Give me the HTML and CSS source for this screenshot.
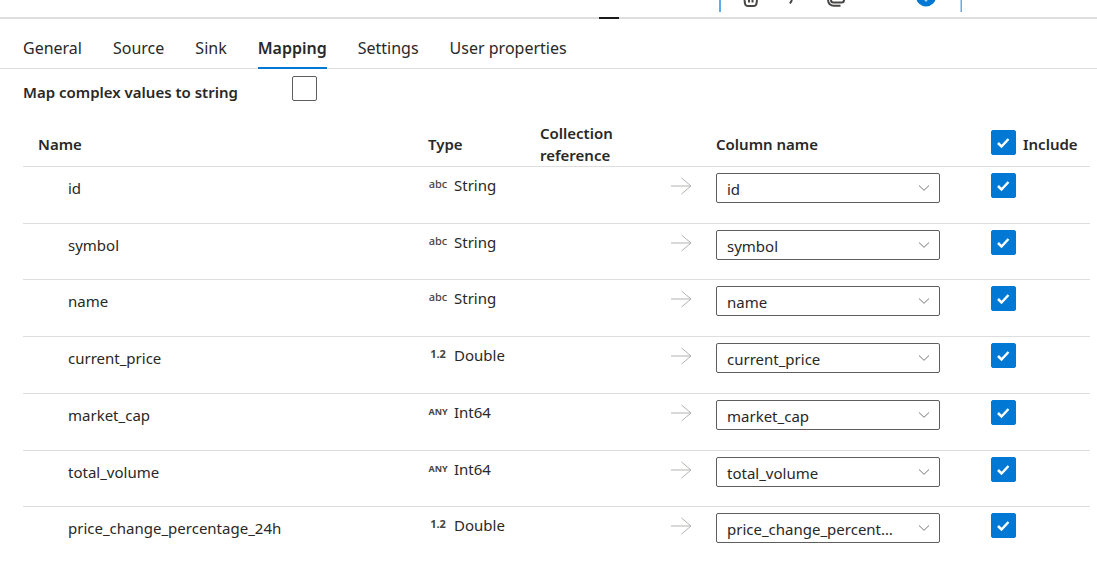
FILE: index.html
```html
<!DOCTYPE html>
<html lang="en">
<head>
<meta charset="utf-8">
<title>Copy activity mapping</title>
<link rel="stylesheet" href="styles.css">
</head>
<body>
<svg class="defs" aria-hidden="true">
  <symbol id="arrow" viewBox="0 0 22 18"><path d="M1 9H21M11.500 1L21 9L11.500 17"/></symbol>
  <symbol id="chevron" viewBox="0 0 12 6"><path d="M1 .5L6 5.300L11 .5"/></symbol>
</svg>
<div class="canvas-edge">
  <svg class="node-tools" viewBox="0 0 244 12" aria-hidden="true">
    <path class="frame" d="M2 0V12M243.500 0V12"/>
    <path class="glyph" d="M26.500 0L27 3.500Q27.300 6 30 6H35.500Q38.200 6 38.500 3.500L39 0M31 0V2.500M34.500 0V2.500"/>
    <path class="glyph" d="M74 0L72 3.500"/>
    <path class="glyph" d="M113 0Q113 2.500 115.500 2.500H123.500Q126 2.500 126 0M110 0Q110.500 5.800 116 5.800H122.500"/>
    <circle class="badge" cx="208" cy="-3.500" r="10"/>
    <path class="badge-mark" d="M206.500 0L208 1.300L209.500 0"/>
  </svg>
  <span class="grip"></span>
</div>
<nav class="tabs">
  <a href="#general">General</a>
  <a href="#source">Source</a>
  <a href="#sink">Sink</a>
  <a href="#mapping" class="active" aria-current="page">Mapping</a>
  <a href="#settings">Settings</a>
  <a href="#user">User properties</a>
</nav>
<main class="panel">
  <div class="option">
    <label for="complex">Map complex values to string</label>
    <input type="checkbox" id="complex" class="check">
  </div>
  <table class="mapping">
    <colgroup><col><col class="c-type"><col class="c-ref"><col class="c-arrow"><col class="c-column"><col class="c-include"></colgroup>
    <thead>
      <tr>
        <th class="name">Name</th><th>Type</th><th>Collection reference</th><th></th><th>Column name</th>
        <th><div class="include"><input type="checkbox" id="all" class="check" checked><label for="all">Include</label></div></th>
      </tr>
    </thead>
    <tbody>
      <tr><td class="name">id</td><td><div class="type"><span class="tag">abc</span>String</div></td><td></td><td><svg class="arrow"><use href="#arrow"/></svg></td><td><div class="picker"><select aria-label="Column for id"><option>id</option></select><svg><use href="#chevron"/></svg></div></td><td><input type="checkbox" class="check" aria-label="Include id" checked></td></tr>
      <tr><td class="name">symbol</td><td><div class="type"><span class="tag">abc</span>String</div></td><td></td><td><svg class="arrow"><use href="#arrow"/></svg></td><td><div class="picker"><select aria-label="Column for symbol"><option>symbol</option></select><svg><use href="#chevron"/></svg></div></td><td><input type="checkbox" class="check" aria-label="Include symbol" checked></td></tr>
      <tr><td class="name">name</td><td><div class="type"><span class="tag">abc</span>String</div></td><td></td><td><svg class="arrow"><use href="#arrow"/></svg></td><td><div class="picker"><select aria-label="Column for name"><option>name</option></select><svg><use href="#chevron"/></svg></div></td><td><input type="checkbox" class="check" aria-label="Include name" checked></td></tr>
      <tr><td class="name">current_price</td><td><div class="type"><span class="tag num">1.2</span>Double</div></td><td></td><td><svg class="arrow"><use href="#arrow"/></svg></td><td><div class="picker"><select aria-label="Column for current_price"><option>current_price</option></select><svg><use href="#chevron"/></svg></div></td><td><input type="checkbox" class="check" aria-label="Include current_price" checked></td></tr>
      <tr><td class="name">market_cap</td><td><div class="type"><span class="tag any">ANY</span>Int64</div></td><td></td><td><svg class="arrow"><use href="#arrow"/></svg></td><td><div class="picker"><select aria-label="Column for market_cap"><option>market_cap</option></select><svg><use href="#chevron"/></svg></div></td><td><input type="checkbox" class="check" aria-label="Include market_cap" checked></td></tr>
      <tr><td class="name">total_volume</td><td><div class="type"><span class="tag any">ANY</span>Int64</div></td><td></td><td><svg class="arrow"><use href="#arrow"/></svg></td><td><div class="picker"><select aria-label="Column for total_volume"><option>total_volume</option></select><svg><use href="#chevron"/></svg></div></td><td><input type="checkbox" class="check" aria-label="Include total_volume" checked></td></tr>
      <tr><td class="name">price_change_percentage_24h</td><td><div class="type"><span class="tag num">1.2</span>Double</div></td><td></td><td><svg class="arrow"><use href="#arrow"/></svg></td><td><div class="picker"><select aria-label="Column for price_change_percentage_24h"><option>price_change_percentage_24h</option></select><svg><use href="#chevron"/></svg></div></td><td><input type="checkbox" class="check" aria-label="Include price_change_percentage_24h" checked></td></tr>
    </tbody>
  </table>
</main>
</body>
</html>
```
FILE: styles.css
```css
* { box-sizing: border-box; }

body {
  margin: 0;
  background: #fff;
  color: #292827;
  font: 15px/22px "Noto Sans", "Open Sans", sans-serif;
}

.defs { display: none; }

.canvas-edge {
  position: relative;
  height: 19px;
  border-bottom: 2px solid #dedede;
}

.node-tools {
  display: block;
  width: 244px;
  height: 12px;
  margin-left: 718px;
  fill: none;
}

.frame { stroke: #5fabec; stroke-width: 2; }
.glyph { stroke: #484644; stroke-width: 2; }
.badge { fill: #0078d4; }
.badge-mark { stroke: #fff; stroke-width: 1; }

.grip {
  position: absolute;
  left: 599px;
  bottom: -2px;
  width: 20px;
  height: 2px;
  background: #1b1a19;
}

.tabs {
  display: flex;
  gap: 31px;
  height: 50px;
  padding: 0 23px;
  border-bottom: 1px solid #dedede;
  font-size: 16px;
}

.tabs a {
  height: 50px;
  padding-top: 18px;
  color: inherit;
  text-decoration: none;
}

.tabs .active {
  font-weight: 600;
  border-bottom: 2px solid #0078d4;
}

.panel { padding: 7px 7px 0 23px; }

.option {
  display: flex;
  gap: 54px;
  font-weight: 600;
}

.option label { padding-top: 5px; }

.check {
  appearance: none;
  display: block;
  flex: none;
  width: 25px;
  height: 25px;
  margin: 0;
  border: 1px solid #605e5c;
  border-radius: 2px;
  background: #fff;
}

.check:checked {
  border-color: #0078d4;
  background: #0078d4 url("data:image/svg+xml,%3Csvg xmlns='http://www.w3.org/2000/svg' viewBox='0 0 25 25'%3E%3Cpath d='M7 13L10.500 16.500L17.500 9' fill='none' stroke='white' stroke-width='2.500'/%3E%3C/svg%3E") center / 25px 25px;
}

.mapping {
  width: 100%;
  margin-top: 15px;
  table-layout: fixed;
  border-collapse: separate;
  border-spacing: 0;
}

.c-type { width: 112px; }
.c-ref { width: 130px; }
.c-arrow { width: 46px; }
.c-column { width: 275px; }
.c-include { width: 99px; }

th {
  height: 48px;
  padding: 4px 0 0;
  border-bottom: 1px solid #dedede;
  text-align: left;
  font-weight: 600;
}

th:nth-child(3) { padding-right: 40px; }
th.name { padding-left: 15px; }

.include {
  display: flex;
  gap: 7px;
  padding-bottom: 4px;
}

.include label { padding-top: 3px; }

td {
  height: 57px;
  padding: 6px 0 0;
  border-bottom: 1px solid #dedede;
  vertical-align: top;
}

tr:nth-child(4n + 2) td { height: 56px; }
tr:last-child td { border-bottom: 0; }

td.name { padding: 10px 0 0 45px; }

.type {
  display: flex;
  gap: 6px;
  padding-top: 1px;
}

.tag {
  width: 20px;
  color: #484644;
  font-size: 11px;
  font-weight: 500;
  line-height: 20px;
  text-align: center;
}

.num { font-weight: 700; }
.any { font-size: 9px; font-weight: 700; line-height: 22px; }

.arrow {
  display: block;
  width: 22px;
  height: 18px;
  margin-top: 4px;
  fill: none;
  stroke: #b5b3b1;
}

.picker {
  display: grid;
  width: 224px;
  align-items: center;
}

.picker > * { grid-area: 1 / 1; }

.picker select {
  appearance: none;
  width: 100%;
  height: 30px;
  padding: 2px 40px 0 10px;
  border: 1px solid #605e5c;
  border-radius: 2px;
  background: #fff;
  color: inherit;
  font: inherit;
  text-overflow: ellipsis;
}

.picker svg {
  justify-self: end;
  width: 12px;
  height: 6px;
  margin-right: 10px;
  fill: none;
  stroke: #797775;
  pointer-events: none;
}
```
